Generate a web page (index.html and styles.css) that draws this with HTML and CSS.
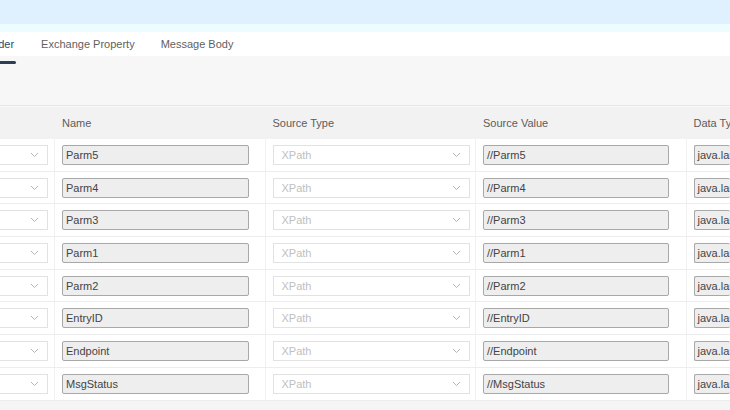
FILE: index.html
```html
<!DOCTYPE html>
<html>
<head>
<meta charset="utf-8">
<link rel="stylesheet" href="styles.css">
</head>
<body>
<div class="topband"></div>
<div class="subband"></div>
<div class="tabs">
  <div class="tab active">Header</div>
  <div class="tab">Exchange Property</div>
  <div class="tab">Message Body</div>
</div>
<div class="toolbar"></div>
<div class="table">
  <div class="hrow">
    <div class="c0"></div>
    <div class="c1">Name</div>
    <div class="c2">Source Type</div>
    <div class="c3">Source Value</div>
    <div class="c4">Data Type</div>
  </div>
  <div id="rows"></div>
</div>
<script src="app.js"></script>
</body>
</html>
```
FILE: styles.css
```css
html, body { margin: 0; padding: 0; }
body {
  width: 730px; height: 410px; overflow: hidden;
  font-family: "Liberation Sans", Arial, sans-serif;
  font-size: 11px; color: #444; background: #f5f5f5;
}
.topband { height: 24px; background: #dff0fe; }
.subband { height: 8px; background: #ecfcff; }
.tabs {
  height: 24px; background: #fff; display: flex; align-items: center;
  position: relative;
}
.tab { color: #5f5f5f; font-size: 11px; white-space: nowrap; position: relative; }
.tab.active { color: #2b4a6b; margin-left: -22px; margin-right: 27px; }
.tab.active::after {
  content: ""; position: absolute; left: 0; right: -2px; top: 23px;
  height: 3px; background: #2b3f56; border-radius: 2px;
}
.tab + .tab { margin-right: 26px; }
.toolbar { height: 49px; background: #f7f7f7; border-bottom: 1px solid #e6e6e6; }
.table { border-top: 1px solid #fafafa; }
.hrow {
  display: flex; height: 32px; align-items: center; background: #f2f2f2;
  color: #5c5c5c; white-space: nowrap;
}
.row {
  display: flex; height: 31.7px; align-items: center; background: #fff;
  border-bottom: 1px solid #ededed;
}
.c0 { width: 55px; flex: none; overflow: hidden; height: 100%; display: flex; align-items: center; }
.c1, .c2, .c3 { width: 203.5px; padding-left: 7px; flex: none; height: 100%; display: flex; align-items: center; }
.c4 { flex: 1; padding-left: 7px; height: 100%; display: flex; align-items: center; overflow: hidden; white-space: nowrap; }
.row .c0, .row .c1, .row .c2, .row .c3 { border-right: 1px solid #f1f1f1; box-sizing: border-box; }
.row .c1, .row .c2, .row .c3 { width: 210.5px; }
.sel {
  box-sizing: border-box; height: 20px; border: 1px solid #e2e2e2; background: #fff;
  display: flex; align-items: center; justify-content: space-between;
  padding: 0 8px 0 8px; color: #c0c0c0;
}
.sel svg { flex: none; }
.sel0 { width: 60px; margin-left: -12px; justify-content: flex-end; }
.sel2 { width: 197px; }
.inp {
  box-sizing: border-box; height: 20px; border: 1px solid #a8a8a8; border-radius: 2px;
  background: #eeeeee; display: flex; align-items: center; padding: 0 3px; color: #444;
  white-space: nowrap; overflow: hidden;
}
.inp1 { width: 187px; }
.inp3 { width: 186px; }
.inp4 { width: 60px; border-right: none; }
```
FILE: app.js
```js
var names = ["Parm5","Parm4","Parm3","Parm1","Parm2","EntryID","Endpoint","MsgStatus"];
var arrow = '<svg width="9" height="6" viewBox="0 0 9 6"><path d="M1 1 L4.5 4.5 L8 1" fill="none" stroke="#b5b5b5" stroke-width="1"/></svg>';
var html = "";
names.forEach(function(n){
  html += '<div class="row">' +
    '<div class="c0"><div class="sel sel0">' + arrow + '</div></div>' +
    '<div class="c1"><div class="inp inp1">' + n + '</div></div>' +
    '<div class="c2"><div class="sel sel2"><span>XPath</span>' + arrow + '</div></div>' +
    '<div class="c3"><div class="inp inp3">//' + n + '</div></div>' +
    '<div class="c4"><div class="inp inp4">java.lang.String</div></div>' +
    '</div>';
});
document.getElementById("rows").innerHTML = html;
```
